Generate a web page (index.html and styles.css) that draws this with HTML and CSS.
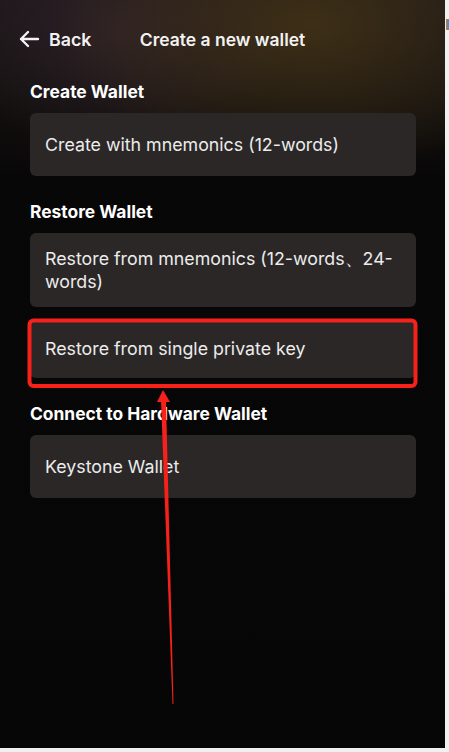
FILE: index.html
```html
<!DOCTYPE html>
<html lang="en">
<head>
<meta charset="utf-8">
<title>Create a new wallet</title>
<link rel="stylesheet" href="styles.css">
</head>
<body>
<div class="app">
  <header class="topbar">
    <button class="back" type="button">
      <svg class="back-icon" viewBox="0 0 22 18" width="22" height="18" aria-hidden="true">
        <path d="M20 9H3M10 2L3 9l7 7" fill="none" stroke="#f2f2f2" stroke-width="2.4" stroke-linecap="round" stroke-linejoin="round"/>
      </svg>
      <span>Back</span>
    </button>
    <h1 class="title">Create a new wallet</h1>
    <span class="spacer"></span>
  </header>

  <main class="content">
    <section class="group">
      <h2 class="group-title">Create Wallet</h2>
      <div class="option">Create with mnemonics (12-words)</div>
    </section>

    <section class="group">
      <h2 class="group-title">Restore Wallet</h2>
      <div class="option">Restore from mnemonics (12-words、24-words)</div>
      <div class="option option-short">Restore from single private key</div>
    </section>

    <section class="group">
      <h2 class="group-title">Connect to Hardware Wallet</h2>
      <div class="option">Keystone Wallet</div>
    </section>
  </main>

  <svg class="annotation" viewBox="0 0 445 748" width="445" height="748" aria-hidden="true">
    <rect x="29.5" y="320.5" width="386" height="65.5" rx="4" fill="none" stroke="#f5211a" stroke-width="4"/>
    <polygon points="161,400 166,400 173.5,704 172.5,704" fill="#f5211a"/>
    <polygon points="163,390 157,402 170,402" fill="#f5211a"/>
  </svg>
</div>
<span class="edge-icon"></span>
</body>
</html>
```

FILE: styles.css
```css
* { box-sizing: border-box; }

html, body {
  margin: 0;
  padding: 0;
}

body {
  width: 449px;
  height: 752px;
  background: #f0f0f0;
  font-family: Inter, "Noto Sans", "Liberation Sans", sans-serif;
  position: relative;
  overflow: hidden;
}

.app {
  position: relative;
  width: 445px;
  height: 748px;
  background:
    radial-gradient(ellipse 260px 150px at 310px 25px, rgba(66, 50, 22, 0.9), rgba(66, 50, 22, 0) 100%),
    radial-gradient(ellipse 180px 120px at 120px 30px, rgba(48, 34, 42, 0.85), rgba(48, 34, 42, 0) 100%),
    linear-gradient(180deg, #1b1619 0px, #141110 90px, #080707 180px, #060606 100%);
  color: #fff;
}

.topbar {
  display: grid;
  grid-template-columns: 1fr auto 1fr;
  align-items: center;
  padding: 28px 18px 0 18px;
  height: 52px;
}

.back {
  display: flex;
  align-items: center;
  gap: 9px;
  background: none;
  border: 0;
  padding: 0;
  color: #f2f2f2;
  font-family: inherit;
  font-size: 17.8px;
  font-weight: 600;
  cursor: pointer;
  justify-self: start;
  margin-top: -2px;
}

.back-icon { display: block; }

.title {
  margin: 0;
  font-size: 17.5px;
  font-weight: 600;
  color: #f2f2f2;
  line-height: 24px;
}

.content {
  padding: 30px 29px 0 30px;
}

.group {
  display: flex;
  flex-direction: column;
  gap: 12px;
  margin-bottom: 26px;
}

.group-title {
  margin: 0 0 -1px;
  font-size: 17.4px;
  font-weight: 700;
  line-height: 20px;
  color: #ffffff;
}

.option {
  display: flex;
  align-items: center;
  min-height: 63px;
  padding: 14px 20px 14px 15px;
  background: #2b2727;
  border-radius: 6px;
  font-size: 17.8px;
  line-height: 23px;
  color: #ececec;
}

.option-short { min-height: 59px; }

.annotation {
  position: absolute;
  left: 0;
  top: 0;
  pointer-events: none;
}

.edge-icon {
  position: absolute;
  left: 446px;
  top: 19px;
  width: 3px;
  height: 11px;
  background: #4a90d9;
  border-top: 1px solid #c97a2a;
  border-bottom: 1px solid #c97a2a;
  border-left: 1px solid #c97a2a;
}
```
